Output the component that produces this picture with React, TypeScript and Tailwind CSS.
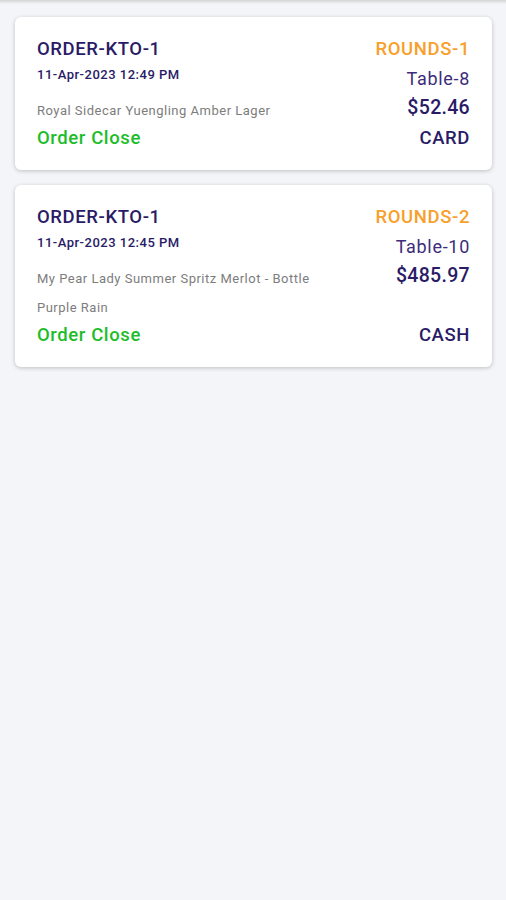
import React from "react";

interface Order {
  id: string;
  date: string;
  rounds: string;
  table: string;
  amount: string;
  items: string[];
  status: string;
  payment: string;
}

const ORDERS: Order[] = [
  {
    id: "ORDER-KTO-1",
    date: "11-Apr-2023 12:49 PM",
    rounds: "ROUNDS-1",
    table: "Table-8",
    amount: "$52.46",
    items: ["Royal Sidecar Yuengling Amber Lager"],
    status: "Order Close",
    payment: "CARD",
  },
  {
    id: "ORDER-KTO-1",
    date: "11-Apr-2023 12:45 PM",
    rounds: "ROUNDS-2",
    table: "Table-10",
    amount: "$485.97",
    items: ["My Pear Lady Summer Spritz Merlot - Bottle", "Purple Rain"],
    status: "Order Close",
    payment: "CASH",
  },
];

function OrderCard({ order }: { order: Order }) {
  return (
    <div className="bg-white rounded-[6px] shadow-[0_1px_4px_rgba(0,0,0,0.22)] pt-[21px] pb-[21px] px-[22px]">
      {/* id + rounds */}
      <div className="flex justify-between leading-[22px] text-[18.5px] tracking-[0.6px] font-medium">
        <span className="text-[#2a1b66]">{order.id}</span>
        <span className="text-[#f7a02c]">{order.rounds}</span>
      </div>

      {/* date + table */}
      <div className="flex justify-between items-start h-[32px]">
        <span className="mt-[6px] leading-[18px] text-[13px] tracking-[0.5px] font-medium text-[#2a1b66]">
          {order.date}
        </span>
        <span className="mt-[6px] leading-[26px] text-[18px] tracking-[0.7px] text-[#3d2d7a]">
          {order.table}
        </span>
      </div>

      {/* items + amount */}
      <div className="flex justify-between items-start">
        <div className="mt-[4px] flex flex-col">
          {order.items.map((item) => (
            <span key={item} className="leading-[29px] text-[13px] tracking-[0.5px] text-[#7d7d7d]">
              {item}
            </span>
          ))}
        </div>
        <span className="mt-[2px] leading-[28px] text-[19.5px] tracking-[0.3px] font-medium text-[#2a1b66]">
          {order.amount}
        </span>
      </div>

      {/* status + payment */}
      <div className="mt-[2px] flex justify-between leading-[22px] text-[18.5px] tracking-[0.6px] font-medium">
        <span className="text-[#1dbd2a]">{order.status}</span>
        <span className="text-[#2a1b66]">{order.payment}</span>
      </div>
    </div>
  );
}

export default function App() {
  return (
    <div className="min-h-[900px] bg-[#f4f5f8]" style={{ fontFamily: "Roboto, 'Noto Sans', sans-serif" }}>
      <div className="h-[4px] bg-gradient-to-b from-[#d4d4d6] to-[#f4f5f8]" />
      <div className="flex flex-col gap-[15px] pt-[13px] pl-[15px] pr-[14px]">
        {ORDERS.map((o, i) => (
          <OrderCard key={i} order={o} />
        ))}
      </div>
    </div>
  );
}
